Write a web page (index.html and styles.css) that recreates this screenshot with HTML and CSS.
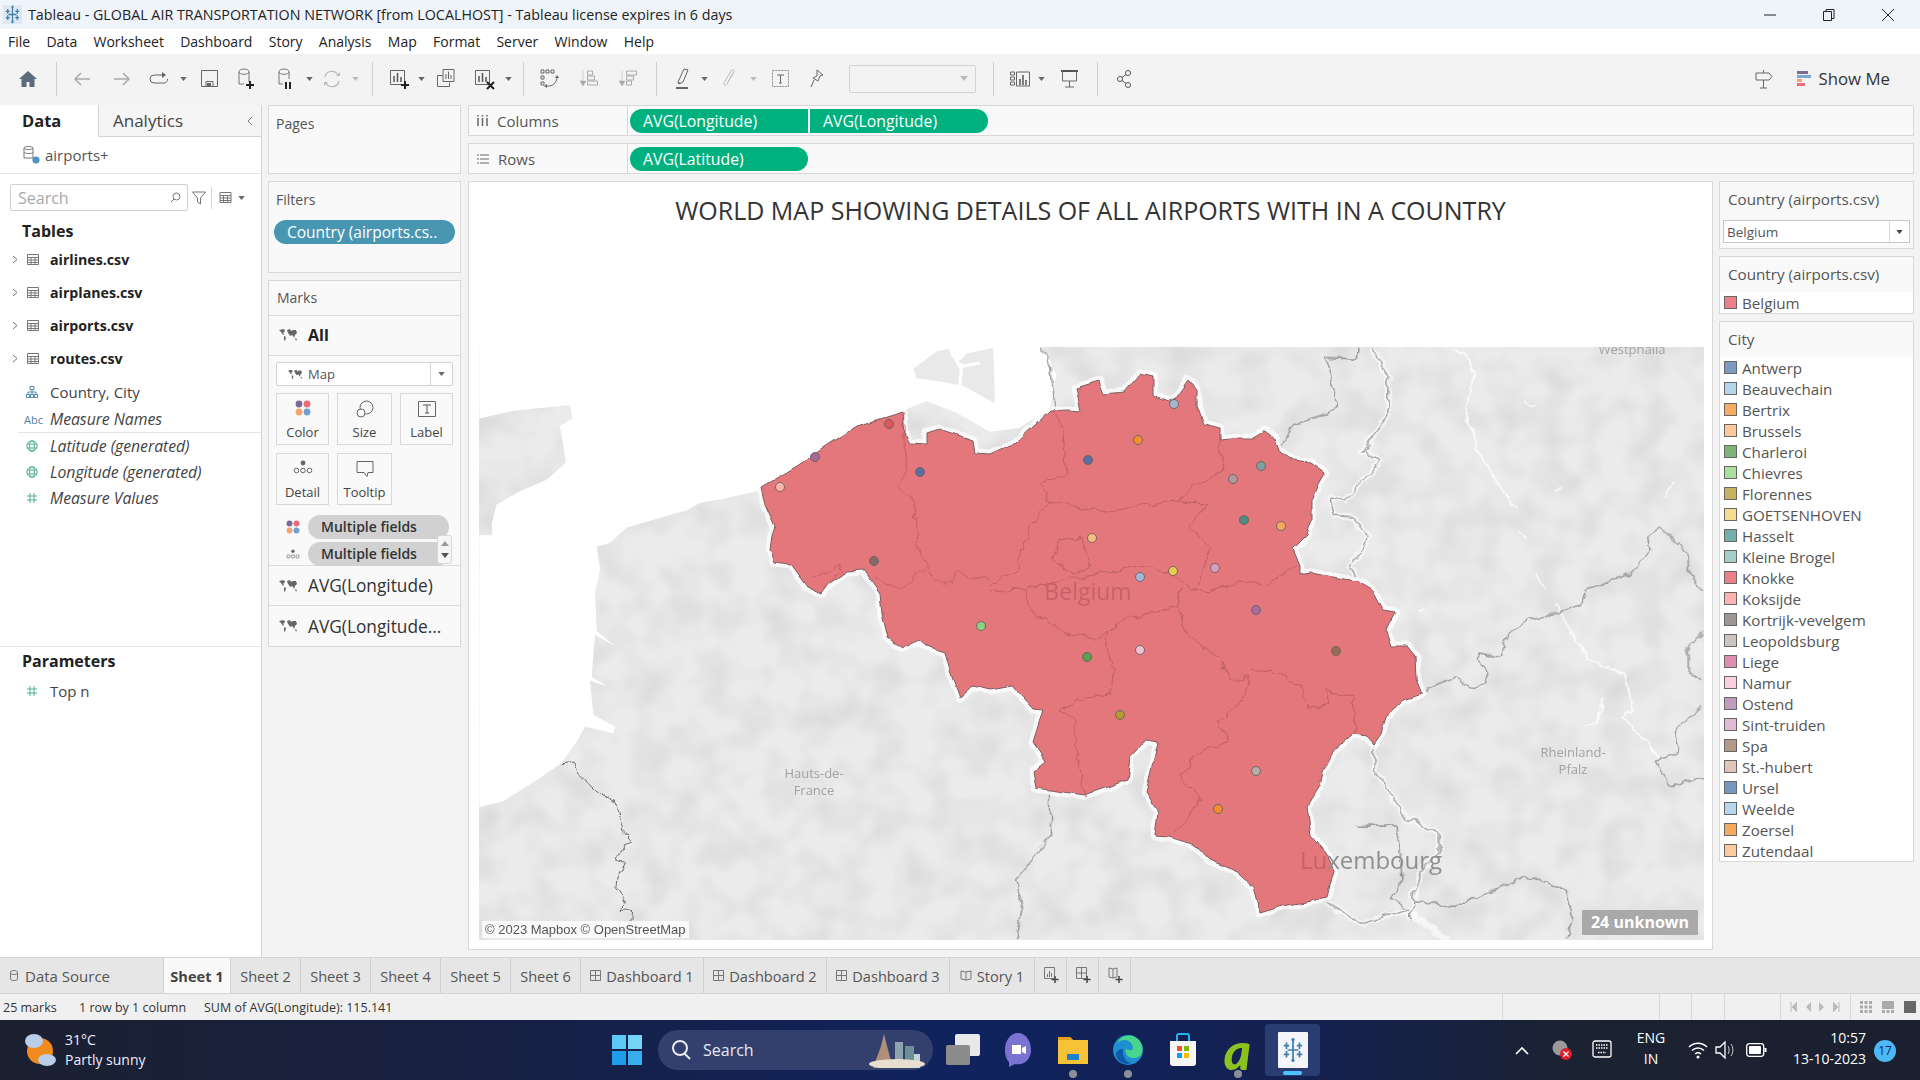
FILE: index.html
```html
<!DOCTYPE html>
<html lang="en">
<head>
<meta charset="utf-8">
<title>Tableau - GLOBAL AIR TRANSPORTATION NETWORK</title>
<link rel="stylesheet" href="styles.css">
</head>
<body>
<svg class="defs" width="0" height="0" aria-hidden="true">
  <symbol id="caret" viewBox="0 0 8 5"><path d="M0 0h8L4 5z"/></symbol>
  <symbol id="mapi" viewBox="0 0 18 14"><path d="M0 2l5-1 1 2-2 2 1 1-1 1-2-3zM5 8l2 1-1 4-1-1zM8 2l3-1 1 2 2-1 3 0 1 3-2 2-1 3-1-2-1-1-2 1-1-2-1-1zM16 10l2 1-1 2z"/></symbol>
  <symbol id="tbl" viewBox="0 0 12 11"><path d="M.5.5h11v10H.5zM.5 3.500h11M.5 6h11M.5 8.500h11M4 3.500v7M8 3.500v7" fill="none" stroke="#777" stroke-width="1"/></symbol>
  <symbol id="globe" viewBox="0 0 12 12"><g fill="none" stroke="#4fb08a" stroke-width="1"><circle cx="6" cy="6" r="5.200"/><ellipse cx="6" cy="6" rx="2.400" ry="5.200"/><path d="M1 4h10M1 8h10"/></g></symbol>
  <symbol id="hash" viewBox="0 0 12 12"><path d="M4 1v10M8 1v10M1 4h10M1 8h10" fill="none" stroke="#4fb08a" stroke-width="1"/></symbol>
  <symbol id="dots" viewBox="0 0 16 16"><circle cx="4" cy="4" r="3.400" fill="#7b6a98"/><circle cx="12" cy="4" r="3.400" fill="#ee6b76"/><circle cx="4" cy="12" r="3.400" fill="#f3a56d"/><circle cx="12" cy="12" r="3.400" fill="#6f9fcf"/></symbol>
  <symbol id="detail" viewBox="0 0 20 14"><circle cx="10" cy="3" r="2.400" fill="#666"/><g fill="none" stroke="#666"><circle cx="3.500" cy="10.500" r="2.300"/><circle cx="10" cy="10.500" r="2.300"/><circle cx="16.500" cy="10.500" r="2.300"/></g></symbol>
  <symbol id="tab" viewBox="0 0 24 24"><g fill="none" stroke="#3f7fae" stroke-width="1.600"><path d="M12 3v18M7 12h10"/><path d="M6 5v6M3.500 8h5M18 5v6M15.500 8h5M6 13v6M3.500 16h5M18 13v6M15.500 16h5"/><path d="M12 1v3M10.500 2.500h3M12 20v3M10.500 21.500h3"/></g></symbol>
</svg>

<div class="app">
  <header class="titlebar">
    <svg class="app-ico" width="19" height="19"><rect width="19" height="19" fill="#dfe7f2"/><use href="#tab" width="19" height="19"/></svg>
    <span class="title-text">Tableau - GLOBAL AIR TRANSPORTATION NETWORK [from LOCALHOST] - Tableau license expires in 6 days</span>
    <div class="win-btns">
      <svg width="14" height="14" viewBox="0 0 14 14"><path d="M1 7h12" stroke="#222" fill="none"/></svg>
      <svg width="14" height="14" viewBox="0 0 14 14"><path d="M1.500 3.500h8v9h-8zM4 3.500V1.500h8v9h-2.500" stroke="#222" fill="none"/></svg>
      <svg width="14" height="14" viewBox="0 0 14 14"><path d="M1 1l12 12M13 1L1 13" stroke="#222" fill="none"/></svg>
    </div>
  </header>

  <nav class="menubar">
    <span>File</span><span>Data</span><span>Worksheet</span><span>Dashboard</span><span>Story</span><span>Analysis</span><span>Map</span><span>Format</span><span>Server</span><span>Window</span><span>Help</span>
  </nav>

  <div class="toolbar">
    <div class="cell w40"><svg width="18" height="16" viewBox="0 0 18 16"><path d="M9 0L0 8h2.500v8h5v-5h3v5h5V8H18z" fill="#5b6b7c"/></svg></div>
    <div class="cell w16"><i class="sep"></i></div>
    <div class="cell w36"><svg width="18" height="14" viewBox="0 0 18 14" class="off"><path d="M17 7H2M8 1L2 7l6 6" fill="none" stroke="#aaa" stroke-width="1.500"/></svg></div>
    <div class="cell w44"><svg width="18" height="14" viewBox="0 0 18 14"><path d="M1 7h15M10 1l6 6-6 6" fill="none" stroke="#aaa" stroke-width="1.500"/></svg></div>
    <div class="cell w30"><svg width="20" height="14" viewBox="0 0 20 14"><path d="M15 3H5a3.500 3.500 0 0 0 0 8h10a3.500 3.500 0 0 0 3.500-4" fill="none" stroke="#666"/><path d="M13 0l4 3-4 3z" fill="#666"/></svg></div>
    <div class="cell w18"><svg class="car" width="7" height="4"><use href="#caret" width="7" height="4"/></svg></div>
    <div class="cell w34"><svg width="17" height="19" viewBox="0 0 17 19"><path d="M.5 1.500h16v16H.5zM5 17.500v-5h7v5" fill="none" stroke="#666"/><path d="M6 14h4v3H6z" fill="#666"/></svg></div>
    <div class="cell w42"><svg width="18" height="22" viewBox="0 0 18 22"><path d="M1 4c0-4 10-4 10 0v10M1 4v12h5M1 4c0 3 10 3 10 0" fill="none" stroke="#777"/><path d="M12 13v8M8 17h8" stroke="#222" stroke-width="2"/></svg></div>
    <div class="cell w34"><svg width="18" height="22" viewBox="0 0 18 22"><path d="M3 4c0-4 10-4 10 0v7M3 4v12h4M3 4c0 3 10 3 10 0" fill="none" stroke="#777"/><path d="M10 14v7M14 14v7" stroke="#222" stroke-width="2"/></svg></div>
    <div class="cell w14"><svg class="car" width="7" height="4"><use href="#caret" width="7" height="4"/></svg></div>
    <div class="cell w32"><svg width="18" height="18" viewBox="0 0 18 18"><path d="M2 7a7 7 0 0 1 13-2M16 11a7 7 0 0 1-13 2" fill="none" stroke="#bbb" stroke-width="1.300"/><path d="M13 6h4V2zM5 12H1v4z" fill="#bbb"/></svg></div>
    <div class="cell w14"><svg class="car lite" width="7" height="4"><use href="#caret" width="7" height="4"/></svg></div>
    <div class="cell w20"><i class="sep"></i></div>
    <div class="cell w36"><svg width="20" height="22" viewBox="0 0 20 22"><path d="M.5 2.500h14v14H.5z" fill="none" stroke="#666"/><path d="M4 8v6M7.500 5v9M11 9v5" stroke="#555" stroke-width="1.500"/><path d="M15 13v8M11 17h8" stroke="#222" stroke-width="2"/></svg></div>
    <div class="cell w6"><svg class="car" width="7" height="4"><use href="#caret" width="7" height="4"/></svg></div>
    <div class="cell w44"><svg width="18" height="19" viewBox="0 0 18 19"><path d="M6 .5h11v12H6zM.5 6.500h5M.5 6.500v11h12v-4" fill="none" stroke="#666"/><path d="M9 5v5M11.500 2.500V10M14 6v4" stroke="#666"/></svg></div>
    <div class="cell w34"><svg width="20" height="22" viewBox="0 0 20 22"><path d="M.5 2.500h14v14H.5z" fill="none" stroke="#666"/><path d="M4 8v6M7.500 5v9M11 9v5" stroke="#555" stroke-width="1.500"/><path d="M12 14l7 7M19 14l-7 7" stroke="#222" stroke-width="2"/></svg></div>
    <div class="cell w12"><svg class="car" width="7" height="4"><use href="#caret" width="7" height="4"/></svg></div>
    <div class="cell w18"><i class="sep"></i></div>
    <div class="cell w34"><svg width="19" height="20" viewBox="0 0 19 20"><path d="M1 1h3v3H1zM6 1h3v3H6zM11 1h3v3h-3zM1 7h3v3H1zM1 13h3v3H1z" fill="none" stroke="#666"/><path d="M6 17c6 1 11-3 11-9" fill="none" stroke="#666"/><path d="M15 9l2-3 2 3zM7 15v4l-3-2z" fill="#666"/></svg></div>
    <div class="cell w46"><svg width="18" height="18" viewBox="0 0 18 18"><path d="M7.500 1h5v4h-5zM7.500 6h7v4h-7zM7.500 11h10v4h-10z" fill="none" stroke="#aaa"/><path d="M3 1v12M0 11l3 5 3-5z" fill="#aaa" stroke="#aaa" stroke-width=".5"/></svg></div>
    <div class="cell w32"><svg width="18" height="18" viewBox="0 0 18 18"><path d="M7.500 1h10v4h-10zM7.500 6h7v4h-7zM7.500 11h5v4h-5z" fill="none" stroke="#aaa"/><path d="M3 1v12M0 11l3 5 3-5z" fill="#aaa" stroke="#aaa" stroke-width=".5"/></svg></div>
    <div class="cell w24"><i class="sep"></i></div>
    <div class="cell w28"><svg width="14" height="22" viewBox="0 0 14 22"><path d="M9 1l4 1-5 12-4 2-1-2z" fill="none" stroke="#666"/><path d="M3 16l1-2 2 1z" fill="#666"/><path d="M1 20h12" stroke="#666" stroke-width="2"/></svg></div>
    <div class="cell w16"><svg class="car" width="7" height="4"><use href="#caret" width="7" height="4"/></svg></div>
    <div class="cell w34"><svg width="14" height="20" viewBox="0 0 14 20"><path d="M11 4L5 15c-1 2-4 1-3-1L9 2c1-2 4-1 3 1L6 13" fill="none" stroke="#bbb"/></svg></div>
    <div class="cell w14"><svg class="car lite" width="7" height="4"><use href="#caret" width="7" height="4"/></svg></div>
    <div class="cell w40"><svg width="17" height="17" viewBox="0 0 17 17"><path d="M.5.5h16v16H.5z" fill="none" stroke="#888" stroke-dasharray="2 1"/><path d="M5 5h7M8.500 5v8M7 13h3" fill="none" stroke="#666"/></svg></div>
    <div class="cell w34"><svg width="14" height="19" viewBox="0 0 14 19"><path d="M7 1l6 5-3 1-2 5-5-3 4-2zM4 11l-3 7" fill="none" stroke="#666"/></svg></div>
    <div class="combo"><svg class="car lite" width="8" height="5"><use href="#caret" width="8" height="5"/></svg></div>
    <div class="cell w34"><i class="sep"></i></div>
    <div class="cell w20"><svg width="20" height="16" viewBox="0 0 20 16"><path d="M.5 1h4v3h-4zM.5 6h4v3h-4zM.5 11h4v3h-4zM6.500 1h13v14h-13z" fill="none" stroke="#666"/><path d="M10 8v6M13 4v10M16 9v5" stroke="#555" stroke-width="1.500"/></svg></div>
    <div class="cell w22"><svg class="car" width="7" height="4"><use href="#caret" width="7" height="4"/></svg></div>
    <div class="cell w34"><svg width="17" height="18" viewBox="0 0 17 18"><path d="M0 1h17" stroke="#555" stroke-width="2"/><path d="M1.500 2v9h14V2M8.500 11v6M4 17h9" fill="none" stroke="#666"/></svg></div>
    <div class="cell w22"><i class="sep"></i></div>
    <div class="cell w32"><svg width="14" height="18" viewBox="0 0 14 18"><g fill="none" stroke="#555"><circle cx="11" cy="3" r="2.500"/><circle cx="3" cy="9" r="2.500"/><circle cx="11" cy="15" r="2.500"/><path d="M5 7.500l4-3M5 10.500l4 3"/></g></svg></div>
    <div class="tb-right">
      <svg width="18" height="20" viewBox="0 0 18 20"><path d="M1 4h13l3 3.500-3 3.500H1zM8.500 1v3M8.500 11v8M5 19h7" fill="none" stroke="#666"/></svg>
      <div class="showme">
        <div class="sm-bars"><i class="b1"></i><i class="b2"></i><i class="b3"></i><i class="b4"></i></div>
        <span>Show Me</span>
      </div>
    </div>
  </div>

  <main class="work">
    <aside class="datapane">
      <div class="tabs">
        <div class="tab-on">Data</div>
        <div class="tab-off">Analytics<svg width="7" height="10" viewBox="0 0 7 10"><path d="M6 1L2 5l4 4" fill="none" stroke="#777"/></svg></div>
      </div>
      <div class="ds-row">
        <svg width="17" height="19" viewBox="0 0 17 19"><path d="M1 2c0-2 9-2 9 0v10H1zM1 2c0 2 9 2 9 0M1 6c0 2 9 2 9 0" fill="none" stroke="#777"/><circle cx="13" cy="14" r="3.600" fill="#4f92bd"/></svg>
        <span>airports+</span>
      </div>
      <div class="search-row">
        <div class="search"><span>Search</span><svg width="11" height="11" viewBox="0 0 11 11"><circle cx="6.500" cy="4.500" r="3.500" fill="none" stroke="#777"/><path d="M4 7L1 10" stroke="#777"/></svg></div>
        <svg width="14" height="14" viewBox="0 0 14 14"><path d="M.5 1h13L8.500 7v6l-3-2V7z" fill="none" stroke="#777"/></svg>
        <i class="vsep"></i>
        <svg width="13" height="11" viewBox="0 0 13 11"><use href="#tbl" width="13" height="11"/></svg>
        <svg class="car" width="7" height="4"><use href="#caret" width="7" height="4"/></svg>
      </div>
      <h3 class="tables-h">Tables</h3>
      <ul class="tbl-list">
        <li><svg width="6" height="9" viewBox="0 0 6 9"><path d="M1 1l4 3.500L1 8" fill="none" stroke="#777"/></svg><svg width="12" height="11"><use href="#tbl" width="12" height="11"/></svg><b>airlines.csv</b></li>
        <li><svg width="6" height="9" viewBox="0 0 6 9"><path d="M1 1l4 3.500L1 8" fill="none" stroke="#777"/></svg><svg width="12" height="11"><use href="#tbl" width="12" height="11"/></svg><b>airplanes.csv</b></li>
        <li><svg width="6" height="9" viewBox="0 0 6 9"><path d="M1 1l4 3.500L1 8" fill="none" stroke="#777"/></svg><svg width="12" height="11"><use href="#tbl" width="12" height="11"/></svg><b>airports.csv</b></li>
        <li><svg width="6" height="9" viewBox="0 0 6 9"><path d="M1 1l4 3.500L1 8" fill="none" stroke="#777"/></svg><svg width="12" height="11"><use href="#tbl" width="12" height="11"/></svg><b>routes.csv</b></li>
      </ul>
      <div class="fields">
        <div class="fld f1"><svg width="12" height="12" viewBox="0 0 12 12"><path d="M4 .5h4v3H4zM.5 8.500h3v3h-3zM8.500 8.500h3v3h-3zM4.500 8.500h3v3h-3zM6 3.500v5M2 8.500V6h8v2.500" fill="none" stroke="#4b86ad"/></svg><span>Country, City</span></div>
        <div class="fld f2 ital div"><em class="abc">Abc</em><span>Measure Names</span></div>
        <div class="fld f2 ital"><svg width="12" height="12"><use href="#globe" width="12" height="12"/></svg><span>Latitude (generated)</span></div>
        <div class="fld f2 ital"><svg width="12" height="12"><use href="#globe" width="12" height="12"/></svg><span>Longitude (generated)</span></div>
        <div class="fld f2 ital"><svg width="12" height="12"><use href="#hash" width="12" height="12"/></svg><span>Measure Values</span></div>
      </div>
      <div class="params">
        <h3>Parameters</h3>
        <div class="fld"><svg width="12" height="12"><use href="#hash" width="12" height="12"/></svg><span>Top n</span></div>
      </div>
    </aside>

    <section class="midcol">
      <div class="card pages"><span class="card-h">Pages</span></div>
      <div class="card filters">
        <span class="card-h">Filters</span>
        <div class="fpill">Country (airports.cs..</div>
      </div>
      <div class="card marks">
        <div class="m-head">Marks</div>
        <div class="m-row m-all"><svg width="18" height="14"><use href="#mapi" width="18" height="14"/></svg><b>All</b></div>
        <div class="m-body">
          <div class="m-drop"><svg width="14" height="11"><use href="#mapi" width="14" height="11"/></svg><span>Map</span><i><svg class="car" width="7" height="4"><use href="#caret" width="7" height="4"/></svg></i></div>
          <div class="m-grid">
            <div class="mbtn"><svg width="16" height="16"><use href="#dots" width="16" height="16"/></svg><span>Color</span></div>
            <div class="mbtn"><svg width="18" height="18" viewBox="0 0 18 18"><circle cx="10.500" cy="7.500" r="6.500" fill="none" stroke="#666"/><circle cx="5" cy="13" r="4" fill="#f9f9f9" stroke="#666"/></svg><span>Size</span></div>
            <div class="mbtn"><svg width="18" height="16" viewBox="0 0 18 16"><path d="M.5.5h17v15H.5z" fill="none" stroke="#666"/><path d="M5 4h8M9 4v8M7 12h4" fill="none" stroke="#555"/></svg><span>Label</span></div>
            <div class="mbtn"><svg width="20" height="14"><use href="#detail" width="20" height="14"/></svg><span>Detail</span></div>
            <div class="mbtn"><svg width="18" height="17" viewBox="0 0 18 17"><path d="M1 1h16v11h-5l-1 4-3-4H1z" fill="none" stroke="#666"/></svg><span>Tooltip</span></div>
          </div>
          <div class="m-pills">
            <div class="pillrow"><svg width="14" height="14"><use href="#dots" width="14" height="14"/></svg><div class="gpill">Multiple fields</div></div>
            <div class="pillrow"><svg width="14" height="10"><use href="#detail" width="14" height="10"/></svg><div class="gpill">Multiple fields</div></div>
            <div class="scroller"><svg width="8" height="5" class="up"><use href="#caret" width="8" height="5"/></svg><svg width="8" height="5"><use href="#caret" width="8" height="5"/></svg></div>
          </div>
        </div>
        <div class="m-row"><svg width="18" height="14"><use href="#mapi" width="18" height="14"/></svg><span>AVG(Longitude)</span></div>
        <div class="m-row"><svg width="18" height="14"><use href="#mapi" width="18" height="14"/></svg><span>AVG(Longitude...</span></div>
      </div>
    </section>

    <section class="viewcol">
      <div class="shelf">
        <div class="shelf-label"><svg width="11" height="11" viewBox="0 0 11 11"><path d="M1 3v8M5.500 3v8M10 3v8" stroke="#666" stroke-width="1.500"/><path d="M1 0v1.500M5.500 0v1.500M10 0v1.500" stroke="#666" stroke-width="1.500"/></svg><span>Columns</span></div>
        <div class="pill">AVG(Longitude)</div>
        <div class="pill end">AVG(Longitude)</div>
      </div>
      <div class="shelf">
        <div class="shelf-label"><svg width="12" height="10" viewBox="0 0 12 10"><path d="M0 1h2M0 5h2M0 9h2M3 1h9M3 5h9M3 9h9" stroke="#666" stroke-width="1.200"/></svg><span>Rows</span></div>
        <div class="pill end">AVG(Latitude)</div>
      </div>
      <div class="canvas-row">
        <div class="view">
          <h1>WORLD MAP SHOWING DETAILS OF ALL AIRPORTS WITH IN A COUNTRY</h1>
          <div class="map">
            <svg class="mapsvg" viewBox="479 347 1225 593" width="1225" height="593">
              <defs>
                <filter id="mott" filterUnits="userSpaceOnUse" x="479" y="347" width="1225" height="593" color-interpolation-filters="sRGB">
                  <feTurbulence type="fractalNoise" baseFrequency=".03" numOctaves="2" seed="8"/>
                  <feColorMatrix values="0 0 0 0 .55  0 0 0 0 .55  0 0 0 0 .55  .34 0 0 0 -.13"/>
                </filter>
                <filter id="jag" filterUnits="userSpaceOnUse" x="479" y="347" width="1225" height="593" color-interpolation-filters="sRGB">
                  <feTurbulence type="fractalNoise" baseFrequency=".09" numOctaves="2" seed="3" result="n"/>
                  <feDisplacementMap in="SourceGraphic" in2="n" scale="9" xChannelSelector="R" yChannelSelector="G"/>
                </filter>
                <filter id="jag2" filterUnits="userSpaceOnUse" x="479" y="347" width="1225" height="593" color-interpolation-filters="sRGB">
                  <feTurbulence type="fractalNoise" baseFrequency=".06" numOctaves="2" seed="5" result="n"/>
                  <feDisplacementMap in="SourceGraphic" in2="n" scale="5" xChannelSelector="R" yChannelSelector="G"/>
                </filter>
              </defs>
              <rect x="479" y="347" width="1225" height="593" fill="#ebebeb"/>
              <rect x="479" y="347" width="1225" height="593" filter="url(#mott)"/>

              <g transform="translate(470,340) scale(.3333,.3827)">
                <path class="sea" d="M28 18L28 205L130 185L300 170L308 205L270 225L288 320L230 365L150 395L80 430L65 480L68 510L28 510L28 1220L100 1205L200 1150L275 1105L320 1050L345 1010L430 1028L435 1010L370 980L360 890L410 905L365 880L375 770L435 800L380 760L375 660L390 600L380 540L420 530L470 490L650 445L690 425L760 415L860 395L873 384L1298 187L1310 180L1370 160L1460 190L1560 240L1650 230L1741 175L1760 90L1720 18Z"/>
                <path class="island" d="M1330 75L1400 30L1440 22L1445 45L1470 55L1490 35L1570 20L1575 165L1480 120L1420 110L1340 100Z"/>
                <path class="white-ln" d="M1440 24L1470 70L1530 60M1470 120L1475 60"/>
              </g>

              <g filter="url(#jag)">
                <g transform="translate(470,340) scale(.3333,.3827)">
                  <path class="border" d="M275 1105L310 1100L320 1130L380 1180L430 1205L450 1250L460 1290L485 1315L460 1320L440 1360L465 1365L445 1400L440 1440L465 1470L450 1490L485 1490L480 1560"/>
                </g>
                <g transform="translate(990,340) scale(.4655,.3827)">
                  <path class="halo" d="M820 20L855 95L855 195L800 290L840 315L760 420L730 410L740 460L780 465L810 510L800 550L770 590L790 630M825 1050L825 1120L860 1190L895 1250L965 1285L965 1340L930 1380L910 1440L905 1520M720 1470L800 1525L900 1490L980 1568"/>
                  <path class="river" d="M995 25L1025 40L1040 100L1020 200L1050 290L1090 370L1130 450M1135 500L1150 522M1170 610L1195 650M1215 690L1250 770L1290 840L1365 870L1380 970L1360 985L1420 1060L1440 1100M1315 935L1310 990L1280 1015M920 710L935 700M1150 160L1170 170M1450 410L1470 370M1215 400L1230 385"/>
                  <path class="border" d="M115 22L130 70L140 180M790 20L790 50L718 45L750 175L650 225L620 290"/>
                  <path class="border" d="M820 20L855 95L855 195L800 290L840 315L760 420L730 410L740 460L780 465L810 510L800 550L770 590L790 630"/>
                  <path class="border" d="M825 1050L825 1120L860 1190L895 1250L965 1285L965 1340L930 1380L910 1440L905 1520M790 1270L870 1270L880 1320L885 1410L860 1460L900 1490L800 1525L720 1470"/>
                  <path class="border" d="M910 1465L1000 1480L1150 1400L1240 1440L1250 1500L1240 1568M130 1180L130 1300L55 1410L70 1480L55 1568"/>
                  <path class="border" d="M930 915L1000 880L1030 910L1070 895L1050 820L1100 830L1110 770L1160 730L1220 710L1270 690L1280 650L1380 610L1420 550L1415 510L1440 490L1500 560L1500 600L1530 660M1530 760L1500 800L1500 870L1530 890M1530 960L1470 1020L1480 1080L1430 1100L1460 1165L1530 1145"/>
                </g>
              </g>

              <g filter="url(#jag2)">
                <polygon class="be-halo" points="761,487 797,466 828,445 857,426 903,412 905,436 908,443 927,444 927,433 939,429 973,440 975,453 990,454 1018,441 1050,411 1067,410 1081,411 1076,388 1099,381 1104,394 1125,392 1140,374 1153,377 1153,395 1169,401 1176,397 1188,380 1197,390 1197,405 1204,424 1220,428 1220,440 1239,438 1253,438 1265,431 1275,439 1279,451 1293,460 1311,462 1325,472 1318,484 1311,501 1311,520 1307,535 1293,549 1300,566 1300,575 1311,573 1332,577 1358,581 1372,589 1383,610 1396,612 1386,631 1391,646 1407,646 1415,656 1416,679 1422,694 1404,700 1386,717 1381,734 1374,744 1367,736 1353,734 1334,750 1323,772 1320,786 1307,807 1311,836 1325,853 1334,870 1327,897 1311,901 1283,906 1260,913 1253,887 1234,870 1209,860 1195,845 1169,837 1155,836 1158,811 1146,792 1158,742 1146,740 1130,757 1127,780 1085,795 1036,788 1033,772 1046,761 1033,742 1043,710 1034,709 1013,686 990,690 973,686 960,698 952,677 945,652 927,646 920,640 903,648 888,638 882,614 880,594 863,570 847,571 830,583 822,594 807,587 790,564 775,562 770,550 772,535 775,527 765,505"/>
                <polygon class="be" points="761,487 797,466 828,445 857,426 903,412 905,436 908,443 927,444 927,433 939,429 973,440 975,453 990,454 1018,441 1050,411 1067,410 1081,411 1076,388 1099,381 1104,394 1125,392 1140,374 1153,377 1153,395 1169,401 1176,397 1188,380 1197,390 1197,405 1204,424 1220,428 1220,440 1239,438 1253,438 1265,431 1275,439 1279,451 1293,460 1311,462 1325,472 1318,484 1311,501 1311,520 1307,535 1293,549 1300,566 1300,575 1311,573 1332,577 1358,581 1372,589 1383,610 1396,612 1386,631 1391,646 1407,646 1415,656 1416,679 1422,694 1404,700 1386,717 1381,734 1374,744 1367,736 1353,734 1334,750 1323,772 1320,786 1307,807 1311,836 1325,853 1334,870 1327,897 1311,901 1283,906 1260,913 1253,887 1234,870 1209,860 1195,845 1169,837 1155,836 1158,811 1146,792 1158,742 1146,740 1130,757 1127,780 1085,795 1036,788 1033,772 1046,761 1033,742 1043,710 1034,709 1013,686 990,690 973,686 960,698 952,677 945,652 927,646 920,640 903,648 888,638 882,614 880,594 863,570 847,571 830,583 822,594 807,587 790,564 775,562 770,550 772,535 775,527 765,505"/>
              </g>

              <g filter="url(#jag)">
                <g transform="translate(990,340) scale(.4655,.3827)">
                  <path class="prov" d="M130 185L155 220L165 350L110 375L120 420L180 435L255 450L330 430L410 420L465 430L430 490L470 540L450 640M490 262L505 345L440 380L405 420M130 420L100 460L65 550L60 600L0 640M0 655L75 650L280 600L320 590L390 610L430 650L470 655L550 630L590 640L660 590M150 525L195 515L215 590L180 610L135 570L150 525M75 650L80 700L160 765L230 780L255 760L285 730L400 700L410 650M255 760L250 800L265 860L260 925L185 940L150 970L185 990L180 1030L205 1190M405 700L425 770L490 830L515 890L555 880L550 930L490 995L510 1050L435 1085L430 1120L405 1135L450 1200L400 1285M560 860L620 870L670 910L680 965L730 955L725 915L780 930L785 1030"/>
                </g>
                <g transform="translate(470,340) scale(.3333,.3827)">
                  <path class="prov" d="M1298 187L1300 290L1315 340L1280 380L1330 420L1340 480L1345 550L1375 590L1290 650L1210 620M1375 590L1390 630L1430 640L1470 605L1500 620L1560 625M1030 620L1080 605L1110 585L1115 605L1060 650"/>
                </g>
              </g>

              <text class="lbl" x="1632" y="354" text-anchor="middle">Westphalia</text>
              <text class="lbl" x="814" y="778" text-anchor="middle">Hauts-de-</text>
              <text class="lbl" x="814" y="795" text-anchor="middle">France</text>
              <text class="lbl" x="1573" y="757" text-anchor="middle">Rheinland-</text>
              <text class="lbl" x="1573" y="774" text-anchor="middle">Pfalz</text>
              <text class="country be-name" x="1088" y="600" text-anchor="middle">Belgium</text>
              <text class="country lux" x="1371" y="869" text-anchor="middle"><tspan class="lux-lu">Lu</tspan>xembourg</text>

              <g class="marks-pts">
                <circle cx="1174" cy="404" r="4.500" fill="#a7b6cf"/><circle cx="1138" cy="440" r="4.500" fill="#f28e2b"/>
                <circle cx="1088" cy="460" r="4.500" fill="#5e6f9f"/><circle cx="1261" cy="466" r="4.500" fill="#7f9f9b"/>
                <circle cx="1233" cy="479" r="4.500" fill="#b09a9a"/><circle cx="1244" cy="520" r="4.500" fill="#4e8a87"/>
                <circle cx="1281" cy="526" r="4.500" fill="#f5a95c"/><circle cx="1092" cy="538" r="4.500" fill="#f8bd80"/>
                <circle cx="1140" cy="577" r="4.500" fill="#a0b8d4"/><circle cx="1173" cy="571" r="4.500" fill="#e9c84e"/>
                <circle cx="1215" cy="568" r="4.500" fill="#d89cbc"/><circle cx="1256" cy="610" r="4.500" fill="#a86d9e"/>
                <circle cx="1336" cy="651" r="4.500" fill="#9c6a55"/><circle cx="1140" cy="650" r="4.500" fill="#f3c0d0"/>
                <circle cx="1087" cy="657" r="4.500" fill="#59a14f"/><circle cx="1120" cy="715" r="4.500" fill="#b6992d"/>
                <circle cx="1256" cy="771" r="4.500" fill="#bbaaa5"/><circle cx="1218" cy="809" r="4.500" fill="#f28e2b"/>
                <circle cx="889" cy="424" r="4.500" fill="#e15759"/><circle cx="815" cy="457" r="4.500" fill="#a56a96"/>
                <circle cx="780" cy="487" r="4.500" fill="#ffb3ad"/><circle cx="920" cy="472" r="4.500" fill="#5e6f9f"/>
                <circle cx="874" cy="561" r="4.500" fill="#8a6a68"/><circle cx="981" cy="626" r="4.500" fill="#8cd17d"/>
              </g>
            </svg>
            <div class="attrib">© 2023 Mapbox © OpenStreetMap</div>
            <div class="unknown">24 unknown</div>
          </div>
        </div>

        <aside class="legends">
          <div class="lg lg1">
            <div class="lg-h">Country (airports.csv)</div>
            <div class="selbox"><span>Belgium</span><i><svg class="car dark" width="7" height="4"><use href="#caret" width="7" height="4"/></svg></i></div>
          </div>
          <div class="lg lg2">
            <div class="lg-h">Country (airports.csv)</div>
            <div class="li"><i class="sw s11"></i>Belgium</div>
          </div>
          <div class="lg lg3">
            <div class="lg-h">City</div>
            <div class="li-wrap">
              <div class="li"><i class="sw s1"></i>Antwerp</div>
              <div class="li"><i class="sw s2"></i>Beauvechain</div>
              <div class="li"><i class="sw s3"></i>Bertrix</div>
              <div class="li"><i class="sw s4"></i>Brussels</div>
              <div class="li"><i class="sw s5"></i>Charleroi</div>
              <div class="li"><i class="sw s6"></i>Chievres</div>
              <div class="li"><i class="sw s7"></i>Florennes</div>
              <div class="li"><i class="sw s8"></i>GOETSENHOVEN</div>
              <div class="li"><i class="sw s9"></i>Hasselt</div>
              <div class="li"><i class="sw s10"></i>Kleine Brogel</div>
              <div class="li"><i class="sw s11"></i>Knokke</div>
              <div class="li"><i class="sw s12"></i>Koksijde</div>
              <div class="li"><i class="sw s13"></i>Kortrijk-vevelgem</div>
              <div class="li"><i class="sw s14"></i>Leopoldsburg</div>
              <div class="li"><i class="sw s15"></i>Liege</div>
              <div class="li"><i class="sw s16"></i>Namur</div>
              <div class="li"><i class="sw s17"></i>Ostend</div>
              <div class="li"><i class="sw s18"></i>Sint-truiden</div>
              <div class="li"><i class="sw s19"></i>Spa</div>
              <div class="li"><i class="sw s20"></i>St.-hubert</div>
              <div class="li"><i class="sw s21"></i>Ursel</div>
              <div class="li"><i class="sw s22"></i>Weelde</div>
              <div class="li"><i class="sw s23"></i>Zoersel</div>
              <div class="li"><i class="sw s24"></i>Zutendaal</div>
            </div>
          </div>
        </aside>
      </div>
    </section>
  </main>

  <div class="sheettabs">
    <div class="st st-ds"><svg width="8" height="11" viewBox="0 0 8 11"><path d="M.5 2c0-2 7-2 7 0v7c0 2-7 2-7 0zM.5 3c0 2 7 2 7 0" fill="none" stroke="#777"/></svg>Data Source</div>
    <div class="st st-s active">Sheet 1</div>
    <div class="st st-s">Sheet 2</div>
    <div class="st st-s">Sheet 3</div>
    <div class="st st-s">Sheet 4</div>
    <div class="st st-s">Sheet 5</div>
    <div class="st st-s">Sheet 6</div>
    <div class="st st-d"><svg width="11" height="11" viewBox="0 0 11 11"><path d="M.5.5h10v10H.5zM.5 5.500h10M5.500.5v10" fill="none" stroke="#777"/></svg>Dashboard 1</div>
    <div class="st st-d"><svg width="11" height="11" viewBox="0 0 11 11"><path d="M.5.5h10v10H.5zM.5 5.500h10M5.500.5v10" fill="none" stroke="#777"/></svg>Dashboard 2</div>
    <div class="st st-d"><svg width="11" height="11" viewBox="0 0 11 11"><path d="M.5.5h10v10H.5zM.5 5.500h10M5.500.5v10" fill="none" stroke="#777"/></svg>Dashboard 3</div>
    <div class="st st-st"><svg width="12" height="11" viewBox="0 0 12 11"><path d="M1 1l5 1 5-1v8l-5 1-5-1zM6 2v8" fill="none" stroke="#777"/></svg>Story 1</div>
    <div class="st st-add"><svg width="16" height="17" viewBox="0 0 16 17"><path d="M.5.5h10v11H.5z" fill="none" stroke="#777"/><path d="M3.500 7v3M5.500 4v6M7.500 6v4" stroke="#777"/><path d="M11 9v7M7.500 12.500h7" stroke="#444" stroke-width="1.500"/></svg></div>
    <div class="st st-add"><svg width="16" height="17" viewBox="0 0 16 17"><path d="M.5.5h10v11H.5zM.5 6h10M5.500.5v11" fill="none" stroke="#777"/><path d="M11 9v7M7.500 12.500h7" stroke="#444" stroke-width="1.500"/></svg></div>
    <div class="st st-add"><svg width="16" height="17" viewBox="0 0 16 17"><path d="M1 1l4 1 4-1v9l-4 1-4-1zM5 2v9" fill="none" stroke="#777"/><path d="M11 9v7M7.500 12.500h7" stroke="#444" stroke-width="1.500"/></svg></div>
  </div>

  <div class="statusbar">
    <span class="s-a">25 marks</span><span class="s-b">1 row by 1 column</span><span class="s-c">SUM of AVG(Longitude): 115.141</span>
    <div class="s-cells">
      <i class="sc1"></i><i class="sc2"></i><i class="sc3"></i><i class="sc4"></i>
      <div class="s-nav">
        <svg width="7" height="10" viewBox="0 0 7 10"><path d="M1 0v10M7 0L2 5l5 5z" fill="#bbb" stroke="#bbb"/></svg>
        <svg width="6" height="10" viewBox="0 0 6 10"><path d="M6 0L1 5l5 5z" fill="#bbb"/></svg>
        <svg width="6" height="10" viewBox="0 0 6 10"><path d="M0 0l5 5-5 5z" fill="#bbb"/></svg>
        <svg width="7" height="10" viewBox="0 0 7 10"><path d="M6 0v10M0 0l5 5-5 5z" fill="#bbb" stroke="#bbb"/></svg>
      </div>
      <div class="s-views">
        <svg width="12" height="12" viewBox="0 0 12 12"><path d="M0 0h3v3H0zM4.500 0h3v3h-3zM9 0h3v3H9zM0 4.500h3v3H0zM4.500 4.500h3v3h-3zM9 4.500h3v3H9zM0 9h3v3H0zM4.500 9h3v3h-3zM9 9h3v3H9z" fill="#aaa"/></svg>
        <svg width="12" height="12" viewBox="0 0 12 12"><path d="M0 0h12v8H0zM0 9h3v3H0zM4.500 9h3v3h-3zM9 9h3v3H9z" fill="#aaa"/></svg>
        <svg width="12" height="12" viewBox="0 0 12 12"><path d="M0 0h12v12H0z" fill="#666"/></svg>
      </div>
    </div>
  </div>

  <footer class="taskbar">
    <div class="weather">
      <svg width="34" height="38" viewBox="0 0 34 38"><circle cx="17" cy="20" r="13" fill="#f08c1e"/><g fill="#b9cfe9"><ellipse cx="11" cy="10" rx="9" ry="7"/><ellipse cx="24" cy="29" rx="9" ry="6"/></g></svg>
      <div class="w-txt"><span>31°C</span><span>Partly sunny</span></div>
    </div>
    <div class="tb-center">
      <svg class="winlogo" width="30" height="30" viewBox="0 0 30 30"><path d="M0 0h14v14H0z" fill="#5cc8f5"/><path d="M16 0h14v14H16z" fill="#74d5f7"/><path d="M0 16h14v14H0z" fill="#1f9ceb"/><path d="M16 16h14v14H16z" fill="#39aeee"/></svg>
      <div class="tsearch">
        <svg width="22" height="22" viewBox="0 0 22 22"><circle cx="10" cy="9" r="7" fill="none" stroke="#e7e9ef" stroke-width="2"/><path d="M14 14l6 6" stroke="#e7e9ef" stroke-width="2"/></svg>
        <span>Search</span>
        <svg class="skyline" width="58" height="36" viewBox="0 0 58 36"><path d="M6 36L14 14l3-12 3 12 6 22z" fill="#b08f79"/><path d="M28 36V10h8v26z" fill="#8fa3ad"/><path d="M38 36V14h9v22z" fill="#6f8f98"/><path d="M47 36V22h6v14z" fill="#c7d2d6"/><ellipse cx="30" cy="32" rx="28" ry="5" fill="#e8dfd0"/></svg>
      </div>
      <div class="tapp"><svg width="36" height="34" viewBox="0 0 36 34"><rect x="10" y="1" width="25" height="22" rx="2" fill="#e9e9e9"/><rect x="1" y="12" width="24" height="20" rx="2" fill="#8c8c8c"/></svg></div>
      <div class="tapp"><svg width="30" height="36" viewBox="0 0 30 36"><path d="M15 1C7 1 2 9 2 18c0 6 2 10 4 12v5l6-3c9 2 16-5 16-14S23 1 15 1z" fill="#7b73d1"/><path d="M9 13h9v9H9zM19 16l4-2v8l-4-2z" fill="#fff"/></svg></div>
      <div class="tapp dot"><svg width="32" height="30" viewBox="0 0 32 30"><path d="M1 2h12l3 3h15v24H1z" fill="#f5c335"/><path d="M1 2h12l3 3H1z" fill="#e5a11c"/><path d="M10 19h12v6H10z" fill="#1d80d1"/></svg></div>
      <div class="tapp dot"><svg width="32" height="34" viewBox="0 0 32 34"><circle cx="16" cy="17" r="15" fill="#1e90d2"/><path d="M29 22a13 13 0 0 0-24-12c5-5 15-4 16 5 0 3-6 3-7 0-3 8 8 14 15 7z" fill="#48d48a"/><path d="M4 21c0 7 9 12 15 9-5-1-9-7-8-14-3 0-7 2-7 5z" fill="#0c5aa8"/></svg></div>
      <div class="tapp"><svg width="28" height="34" viewBox="0 0 28 34"><path d="M1 8h26v22a3 3 0 0 1-3 3H4a3 3 0 0 1-3-3z" fill="#f7f7f7"/><path d="M8 8V3a2 2 0 0 1 2-2h8a2 2 0 0 1 2 2v5" fill="none" stroke="#28b3e8" stroke-width="2"/><path d="M8 13h5v5H8z" fill="#f25022"/><path d="M15 13h5v5h-5z" fill="#7fba00"/><path d="M8 20h5v5H8z" fill="#00a4ef"/><path d="M15 20h5v5h-5z" fill="#ffb900"/></svg></div>
      <div class="tapp dot"><span class="arduino">a</span></div>
      <div class="tapp tactive"><svg width="30" height="36" viewBox="0 0 30 36"><rect width="30" height="36" rx="1" fill="#f3f5f8"/><use href="#tab" x="2" y="5" width="26" height="26"/></svg><i class="tbar"></i></div>
    </div>
    <div class="tray">
      <svg class="t-up" width="14" height="9" viewBox="0 0 14 9"><path d="M1 8l6-6 6 6" fill="none" stroke="#fff" stroke-width="1.600"/></svg>
      <svg class="t-ic" width="22" height="22" viewBox="0 0 22 22"><circle cx="9" cy="10" r="7.500" fill="#9a9a9a"/><circle cx="15" cy="16" r="6" fill="#e21b2b"/><path d="M12.500 13.500l5 5M17.500 13.500l-5 5" stroke="#fff" stroke-width="1.300"/></svg>
      <svg class="t-ic" width="20" height="18" viewBox="0 0 20 18"><rect x="1" y="1" width="18" height="16" rx="2" fill="none" stroke="#fff" stroke-width="1.300"/><path d="M4 5h12M4 8h12M6 12.500h8" stroke="#fff" stroke-width="1.400" stroke-dasharray="1.500 1"/></svg>
      <div class="lang"><span>ENG</span><span>IN</span></div>
      <svg class="t-ic" width="20" height="18" viewBox="0 0 20 18"><path d="M1 6c5-5 13-5 18 0M4 9.500c3.500-3.500 8.500-3.500 12 0M7 13c1.800-1.800 4.200-1.800 6 0" fill="none" stroke="#fff" stroke-width="1.500"/><circle cx="10" cy="16" r="1.500" fill="#fff"/></svg>
      <svg class="t-ic" width="20" height="20" viewBox="0 0 20 20"><path d="M1 7h4l5-5v16l-5-5H1z" fill="none" stroke="#fff" stroke-width="1.300"/><path d="M13 6c1.500 2.500 1.500 5.500 0 8M16 4c2.500 3.500 2.500 8.500 0 12" fill="none" stroke="#ccc"/></svg>
      <svg class="t-ic" width="21" height="14" viewBox="0 0 21 14"><rect x=".7" y=".7" width="17" height="12.600" rx="2.500" fill="none" stroke="#fff" stroke-width="1.300"/><rect x="3" y="3" width="12" height="8" rx="1" fill="#fff"/><rect x="18.500" y="5" width="2" height="4" fill="#fff"/></svg>
      <div class="clock"><span>10:57</span><span>13-10-2023</span></div>
      <div class="badge">17</div>
    </div>
  </footer>
</div>
</body>
</html>
```

FILE: styles.css
```css
* { box-sizing: border-box; }
html, body { margin: 0; padding: 0; width: 1920px; height: 1080px; overflow: hidden; }
body { font-family: "Open Sans", "Liberation Sans", sans-serif; color: #333; background: #f3f3f3; }
.defs { position: absolute; }
h1, h3, ul { margin: 0; padding: 0; }
ul { list-style: none; }
i, em { font-style: normal; }
svg { display: block; flex: none; }
.car { fill: #666; }
.car.lite { fill: #bbb; }
.car.dark { fill: #444; }

.app { display: flex; flex-direction: column; height: 1080px; width: 1920px; }

.titlebar { height: 29px; background: #eff3fa; display: flex; align-items: center; padding-left: 3px; flex: none; }
.app-ico { margin-right: 6px; }
.title-text { font-size: 14.300px; color: #222; font-family: "Open Sans", sans-serif; }
.win-btns { margin-left: auto; display: flex; gap: 45px; padding-right: 25px; }

.menubar { height: 25px; background: #fff; display: flex; align-items: center; padding-left: 8px; gap: 16.300px; font-size: 14px; color: #222; flex: none; }

.toolbar { height: 51px; background: #f3f3f3; display: flex; align-items: center; padding: 0 0 2px 8px; flex: none; }
.cell { display: flex; align-items: center; justify-content: center; height: 34px; flex: none; }
.sep { display: block; width: 1px; height: 34px; background: #cfcfcf; }
.w6 { width: 6px; } .w12 { width: 12px; } .w14 { width: 14px; } .w16 { width: 16px; } .w18 { width: 18px; }
.w20 { width: 20px; } .w22 { width: 22px; } .w24 { width: 24px; } .w28 { width: 28px; } .w30 { width: 30px; }
.w32 { width: 32px; } .w34 { width: 34px; } .w36 { width: 36px; } .w40 { width: 40px; } .w42 { width: 42px; }
.w44 { width: 44px; } .w46 { width: 46px; }
.combo { width: 127px; height: 28px; margin-left: 15px; border: 1px solid #d2d2d2; border-radius: 2px; display: flex; align-items: center; justify-content: flex-end; padding-right: 7px; }
.tb-right { margin-left: auto; display: flex; align-items: center; gap: 24px; padding-right: 30px; }
.showme { display: flex; align-items: center; gap: 8px; font-size: 16.800px; color: #333; }
.sm-bars { display: flex; flex-direction: column; width: 14px; gap: 1px; }
.sm-bars i { display: block; height: 3px; }
.b1 { width: 11px; background: #7d6a95; } .b2 { width: 14px; background: #7ea6d3; } .b3 { width: 5px; background: #f3a56d; } .b4 { width: 8px; background: #ee6b76; }

.work { flex: 1; display: flex; min-height: 0; background: #f3f3f3; }

.datapane { width: 262px; flex: none; background: #fff; border-right: 1px solid #d4d4d4; display: flex; flex-direction: column; }
.tabs { height: 32px; display: flex; flex: none; }
.tab-on { width: 98px; font-size: 16.500px; font-weight: 700; color: #222; padding-left: 22px; line-height: 32px; }
.tab-off { flex: 1; background: #f5f5f5; border-left: 1px solid #d4d4d4; border-bottom: 1px solid #d4d4d4; font-size: 17px; padding-left: 14px; line-height: 31px; color: #444; display: flex; align-items: center; justify-content: space-between; padding-right: 8px; }
.ds-row { height: 37px; border-bottom: 1px solid #e3e3e3; display: flex; align-items: center; padding-left: 23px; gap: 5px; font-size: 15px; color: #555; flex: none; }
.search-row { display: flex; align-items: center; padding: 10px 0 0 10px; flex: none; }
.search { width: 178px; height: 27px; border: 1px solid #cfcfcf; border-radius: 2px; display: flex; align-items: center; justify-content: space-between; padding: 0 6px 0 7px; font-size: 16px; color: #a8a8a8; margin-right: 4px; }
.vsep { display: block; width: 1px; height: 22px; background: #d4d4d4; margin: 0 7px 0 5px; }
.search-row .car { margin-left: 6px; }
.tables-h { font-size: 16px; font-weight: 700; color: #222; padding: 8px 0 0 22px; line-height: 24px; }
.tbl-list { padding-top: 0; }
.tbl-list li { height: 33px; display: flex; align-items: center; font-size: 14.200px; color: #222; padding-left: 12px; }
.tbl-list li svg + svg { margin-left: 9px; }
.tbl-list b { font-weight: 700; margin-left: 11px; }
.fields { padding-top: 5px; flex: 1; }
.fld { display: flex; align-items: center; font-size: 15px; color: #444; padding-left: 26px; gap: 12px; }
.f1 { height: 26px; padding-bottom: 2px; }
.f2 { height: 26px; }
.ital span { font-style: italic; font-size: 15.800px; letter-spacing: -.05px; }
.div { height: 27px; position: relative; border-bottom: 1px solid #e3e3e3; margin-left: 18px; padding-left: 6px; }
.abc { font-size: 11px; color: #4b7fa3; width: 16px; margin-right: -2px; }
.params { height: 311px; flex: none; border-top: 1px solid #e3e3e3; }
.params h3 { font-size: 16px; font-weight: 700; color: #222; padding-left: 22px; line-height: 29px; }
.params .fld { height: 30px; }

.midcol { width: 193px; margin-left: 6px; flex: none; display: flex; flex-direction: column; gap: 7px; }
.card { border: 1px solid #d8d8d8; background: #f9f9f9; flex: none; }
.card-h { display: block; font-size: 14px; color: #555; padding: 8px 0 0 7px; line-height: 20px; }
.pages { height: 69px; }
.filters { height: 92px; }
.fpill { margin: 10px 5px 0 5px; height: 24px; border-radius: 12px; background: #4996b2; color: #fff; font-size: 15.500px; line-height: 24px; padding-left: 13px; white-space: nowrap; }
.marks { height: 367px; display: flex; flex-direction: column; }
.m-head { height: 35px; line-height: 33px; font-size: 14px; color: #555; padding-left: 8px; border-bottom: 1px solid #dcdcdc; flex: none; }
.m-row { height: 40px; display: flex; align-items: center; padding-left: 10px; gap: 11px; font-size: 17.300px; color: #333; border-bottom: 1px solid #dcdcdc; flex: none; }
.m-row svg { fill: #666; }
.m-row:last-child { border-bottom: 0; }
.m-all { padding-bottom: 2px; }
.m-all b { font-weight: 700; color: #222; font-size: 16px; }
.m-body { height: 210px; padding: 6px 7px 0; border-bottom: 1px solid #dcdcdc; flex: none; }
.m-drop { height: 24px; border: 1px solid #d2d2d2; border-radius: 2px; display: flex; align-items: center; padding-left: 11px; gap: 6px; font-size: 13px; color: #555; background: #fff; }
.m-drop svg { fill: #666; }
.m-drop i { margin-left: auto; width: 22px; height: 22px; border-left: 1px solid #d2d2d2; display: flex; align-items: center; justify-content: center; }
.m-grid { display: grid; grid-template-columns: 53px 55px 53px; column-gap: 8px; row-gap: 8px; margin-top: 7px; }
.mbtn { height: 52px; border: 1px solid #d8d8d8; display: flex; flex-direction: column; align-items: center; font-size: 13px; color: #444; padding-top: 6px; }
.mbtn svg { height: 18px; margin-bottom: 5px; }
.m-pills { position: relative; margin-top: 8px; }
.pillrow { height: 27px; display: flex; align-items: center; gap: 8px; padding-left: 10px; }
.pillrow svg { width: 14px; }
.gpill { width: 141px; height: 24px; border-radius: 12px; background: #d1d1d1; font-size: 14px; line-height: 24px; padding-left: 13px; color: #333; font-weight: 600; }
.scroller { position: absolute; right: 1px; top: 22px; width: 15px; height: 29px; border: 1px solid #d8d8d8; border-radius: 3px; background: #f5f5f5; display: flex; flex-direction: column; align-items: center; justify-content: center; gap: 7px; fill: #555; }
.scroller .up { transform: rotate(180deg); fill: #999; }

.viewcol { flex: 1; margin-left: 7px; margin-right: 6px; min-width: 0; display: flex; flex-direction: column; gap: 7px; }
.shelf { height: 31px; border: 1px solid #d8d8d8; background: #f9f9f9; display: flex; align-items: center; flex: none; padding-right: 6px; }
.shelf-label { width: 159px; height: 29px; border-right: 1px solid #d8d8d8; display: flex; align-items: center; padding-left: 8px; gap: 9px; font-size: 15px; color: #555; margin-right: 2px; }
.pill { width: 178px; height: 24px; background: #00b180; color: #fff; font-size: 15.800px; line-height: 24px; padding-left: 13px; margin-right: 2px; border-radius: 12px 0 0 12px; }
.pill.end { border-radius: 0 12px 12px 0; }
.shelf-label + .pill.end { border-radius: 12px; }
.canvas-row { flex: 1; display: flex; gap: 6px; min-height: 0; padding-bottom: 7px; }
.view { flex: none; width: 1245px; border: 1px solid #d8d8d8; background: #fff; padding: 0 10px 9px 10px; display: flex; flex-direction: column; }
.view h1 { font-size: 25px; font-weight: 400; color: #333; text-align: center; height: 165px; line-height: 56px; white-space: nowrap; }
.map { position: relative; width: 1225px; height: 593px; overflow: hidden; }
.mapsvg { width: 1225px; height: 593px; }
.sea { fill: #fff; }
.island { fill: #e9e9e9; }
.white-ln { fill: none; stroke: #fff; stroke-width: 3; vector-effect: non-scaling-stroke; }
.border { fill: none; stroke: #6e6e6e; stroke-width: 1; vector-effect: non-scaling-stroke; }
.halo { fill: none; stroke: #fff; stroke-opacity: .65; stroke-width: 6; stroke-linejoin: round; vector-effect: non-scaling-stroke; }
.river { fill: none; stroke: #fff; stroke-width: 1.500; vector-effect: non-scaling-stroke; }
.be-halo { fill: none; stroke: #fff; stroke-opacity: .72; stroke-width: 9; stroke-linejoin: round; }
.be { fill: #e4777c; stroke: #7d5c5e; stroke-width: 1; stroke-linejoin: round; }
.prov { fill: none; stroke: #bd5f66; stroke-width: 1; vector-effect: non-scaling-stroke; }
.lbl { font-family: "Open Sans", sans-serif; font-size: 13px; fill: #a2a2a2; }
.country { font-family: "Open Sans", sans-serif; }
.be-name { font-size: 23px; fill: #c7616a; }
.lux { font-size: 24px; fill: #8f8f8f; }
.lux-lu { fill: #c7616a; }
.marks-pts circle { stroke: #5f5f5f; stroke-width: 1; stroke-opacity: .85; }
.attrib { position: absolute; left: 3px; bottom: 2px; height: 17px; padding: 0 3px; background: rgba(255,255,255,.8); font-family: "Liberation Sans", sans-serif; font-size: 13px; line-height: 17px; color: #555; }
.unknown { position: absolute; right: 6px; bottom: 5px; width: 116px; height: 25px; background: #a9a9a9; border-radius: 1px; color: #fff; font-size: 16px; font-weight: 700; text-align: center; line-height: 25px; }

.legends { flex: 1; display: flex; flex-direction: column; gap: 7px; min-width: 0; }
.lg { border: 1px solid #d8d8d8; background: #fff; flex: none; }
.lg-h { height: 35px; line-height: 35px; background: #f9f9f9; font-size: 15.200px; color: #555; padding-left: 8px; }
.lg1 { height: 68px; background: #f9f9f9; }
.selbox { margin: 3px 3px 0; height: 23px; border: 1px solid #c8c8c8; background: #fff; display: flex; align-items: center; justify-content: space-between; font-size: 13.500px; color: #555; padding-left: 3px; }
.selbox i { width: 20px; height: 21px; border-left: 1px solid #d8d8d8; display: flex; align-items: center; justify-content: center; }
.lg2 { height: 58px; }
.lg3 { height: 541px; }
.li-wrap { padding-top: 0; }
.li { height: 21px; display: flex; align-items: center; gap: 5px; font-size: 15.200px; color: #555; padding-left: 4px; }
.sw { display: block; width: 13px; height: 13px; border: 1px solid #666; flex: none; }
.s1 { background: #7b9cc0; } .s2 { background: #b4d6ed; } .s3 { background: #f6ac62; } .s4 { background: #fec99a; }
.s5 { background: #7fb577; } .s6 { background: #abdf9f; } .s7 { background: #c6b260; } .s8 { background: #f4dd8e; }
.s9 { background: #74b0ab; } .s10 { background: #a4cfc8; } .s11 { background: #ec8087; } .s12 { background: #ffb3b1; }
.s13 { background: #9c9694; } .s14 { background: #cdc3c0; } .s15 { background: #de8fb1; } .s16 { background: #fad0df; }
.s17 { background: #c29abb; } .s18 { background: #e1bad5; } .s19 { background: #b39a89; } .s20 { background: #e2c4b8; }
.s21 { background: #7697be; } .s22 { background: #b5d6ec; } .s23 { background: #f5ab5f; } .s24 { background: #fdca9c; }

.sheettabs { height: 37px; flex: none; display: flex; background: #e6e6e6; border-top: 1px solid #d4d4d4; border-bottom: 1px solid #d4d4d4; }
.st { display: flex; align-items: center; justify-content: center; gap: 5px; font-size: 14.600px; color: #555; border-right: 1px solid #d0d0d0; flex: none; }
.st-ds { width: 163px; border-right: 0; justify-content: flex-start; padding-left: 10px; gap: 7px; font-size: 15px; }
.st-s { width: 70px; }
.st.active { width: 68px; background: #f9f9f9; font-weight: 700; color: #444; border-left: 1px solid #d0d0d0; }
.st-d { width: 123px; }
.st-st { width: 85px; }
.st-add { width: 32px; padding-left: 3px; }

.statusbar { height: 26px; flex: none; background: #f0f0f0; display: flex; align-items: center; font-size: 12.500px; color: #333; }
.s-a { margin-left: 3px; width: 76px; }
.s-b { width: 125px; }
.s-cells { margin-left: auto; height: 26px; display: flex; align-items: center; }
.s-cells > i { display: block; width: 1px; height: 26px; background: #dadada; }
.sc1 { margin-right: 156px; }
.sc2 { margin-right: 31px; }
.sc3 { margin-right: 32px; }
.sc4 { margin-right: 55px; }
.s-nav { display: flex; gap: 8px; width: 71px; padding-left: 9px; align-items: center; height: 26px; border-left: 1px solid #dadada; border-right: 1px solid #dadada; }
.s-views { display: flex; gap: 10px; padding: 0 4px 0 9px; }

.taskbar { height: 60px; flex: none; position: relative; display: flex; align-items: center; color: #fff; background: linear-gradient(90deg, #1b2030 0%, #182040 22%, #10235e 50%, #142150 68%, #1b2232 82%, #1b2030 100%); }
.weather { display: flex; align-items: center; gap: 8px; padding-left: 23px; width: 612px; }
.w-txt { display: flex; flex-direction: column; font-size: 14px; line-height: 20px; color: #eef; }
.tb-center { display: flex; align-items: center; }
.winlogo { margin-right: 16px; }
.tsearch { width: 275px; height: 40px; border-radius: 20px; background: #33406e; display: flex; align-items: center; padding: 0 0 0 12px; gap: 11px; font-size: 16px; color: #e7e9ef; margin-right: 2px; position: relative; }
.skyline { position: absolute; right: 8px; top: 2px; }
.tapp { width: 55px; height: 52px; display: flex; align-items: center; justify-content: center; position: relative; }
.tapp.dot::before { content: ""; position: absolute; bottom: -2px; left: 50%; margin-left: -4px; width: 8px; height: 8px; border-radius: 50%; background: #8b8f9a; }
.arduino { font-family: "Lato", sans-serif; font-style: italic; font-weight: 900; font-size: 52px; line-height: 44px; color: #8cc21f; }
.tactive { background: #2a3d72; border-radius: 4px; }
.tbar { position: absolute; bottom: 1px; left: 18px; width: 19px; height: 4px; border-radius: 2px; background: #4cc2ff; }
.tray { position: absolute; right: 0; top: 0; height: 60px; display: flex; align-items: center; }
.t-up { position: absolute; right: 391px; top: 26px; }
.t-ic { position: absolute; }
.t-ic:nth-of-type(2) { right: 347px; top: 18px; }
.t-ic:nth-of-type(3) { right: 308px; top: 20px; }
.t-ic:nth-of-type(4) { right: 212px; top: 21px; }
.t-ic:nth-of-type(5) { right: 185px; top: 20px; }
.t-ic:nth-of-type(6) { right: 153px; top: 23px; }
.lang { position: absolute; right: 254px; top: 7px; display: flex; flex-direction: column; align-items: center; font-size: 14px; line-height: 21px; width: 30px; }
.clock { position: absolute; right: 54px; top: 7px; display: flex; flex-direction: column; align-items: flex-end; font-size: 14px; line-height: 21px; white-space: nowrap; }
.badge { position: absolute; right: 24px; top: 20px; width: 22px; height: 22px; border-radius: 50%; background: #4cb8f5; color: #10235e; font-size: 12px; text-align: center; line-height: 22px; }
```
